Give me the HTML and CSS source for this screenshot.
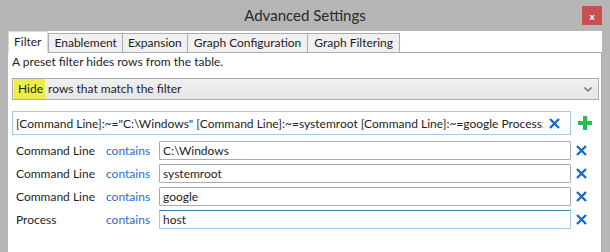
FILE: index.html
```html
<!DOCTYPE html>
<html lang="en">
<head>
  <meta charset="UTF-8">
  <title>Advanced Settings</title>
  <link rel="stylesheet" href="styles.css">
</head>
<body>
  <div class="window">
    <!-- Barra de título -->
    <div class="titlebar">
      <span class="title">Advanced Settings</span>
      <span class="close">x</span>
    </div>

    <div class="client">
      <!-- Abas -->
      <div class="tabs">
        <div class="tab active">Filter</div>
        <div class="tab">Enablement</div>
        <div class="tab">Expansion</div>
        <div class="tab">Graph Configuration</div>
        <div class="tab">Graph Filtering</div>
      </div>

      <div class="pane">
        <p class="hint">A preset filter hides rows from the table.</p>

        <div class="select">
          <span class="select-text"><span class="hl">Hide</span> rows that match the filter</span>
          <svg class="chevron" width="8" height="5" viewBox="0 0 8 5">
            <path d="M0.5 0.5 L4 4 L7.5 0.5" fill="none" stroke="#606060" stroke-width="1.2"/>
          </svg>
        </div>

        <div class="query-row">
          <div class="query">
            <span class="query-text">[Command Line]:~="C:\Windows" [Command Line]:~=systemroot [Command Line]:~=google Process:~=host</span>
            <svg class="icon-x" width="11" height="11" viewBox="0 0 11 11">
              <path d="M1 1 L10 10 M10 1 L1 10" stroke="#1b6ac9" stroke-width="2.4"/>
            </svg>
          </div>
          <svg class="icon-plus" width="14" height="14" viewBox="0 0 14 14">
            <path d="M7 0 V14 M0 7 H14" stroke="#22c14f" stroke-width="4"/>
          </svg>
        </div>

        <div class="conditions">
          <div class="cond">
            <span class="field">Command Line</span>
            <span class="op">contains</span>
            <div class="value">C:\Windows</div>
            <svg class="icon-x" width="11" height="11" viewBox="0 0 11 11"><path d="M1 1 L10 10 M10 1 L1 10" stroke="#1b6ac9" stroke-width="2.4"/></svg>
          </div>
          <div class="cond">
            <span class="field">Command Line</span>
            <span class="op">contains</span>
            <div class="value">systemroot</div>
            <svg class="icon-x" width="11" height="11" viewBox="0 0 11 11"><path d="M1 1 L10 10 M10 1 L1 10" stroke="#1b6ac9" stroke-width="2.4"/></svg>
          </div>
          <div class="cond">
            <span class="field">Command Line</span>
            <span class="op">contains</span>
            <div class="value">google</div>
            <svg class="icon-x" width="11" height="11" viewBox="0 0 11 11"><path d="M1 1 L10 10 M10 1 L1 10" stroke="#1b6ac9" stroke-width="2.4"/></svg>
          </div>
          <div class="cond">
            <span class="field">Process</span>
            <span class="op">contains</span>
            <div class="value focus">host</div>
            <svg class="icon-x" width="11" height="11" viewBox="0 0 11 11"><path d="M1 1 L10 10 M10 1 L1 10" stroke="#1b6ac9" stroke-width="2.4"/></svg>
          </div>
        </div>
      </div>
    </div>
  </div>
</body>
</html>
```

FILE: styles.css
```css
/* Reset */
* {
  margin: 0;
  padding: 0;
  box-sizing: border-box;
}

body {
  font-family: Lato, "Noto Sans", sans-serif;
  font-size: 12px;
  color: #1e1e1e;
  background: #b6b6b6;
  width: 610px;
  height: 252px;
  overflow: hidden;
}

.window {
  height: 252px;
  display: flex;
  flex-direction: column;
}

/* Barra de título */
.titlebar {
  height: 31px;
  flex: none;
  display: flex;
  align-items: center;
  justify-content: center;
  position: relative;
}

.title {
  font-size: 15px;
  color: #2a2a2a;
  margin-top: -1px;
}

.close {
  position: absolute;
  top: 6px;
  right: 8px;
  width: 20px;
  height: 19px;
  background: #c75050;
  color: #fff;
  font-weight: bold;
  font-size: 10px;
  display: flex;
  align-items: center;
  justify-content: center;
  line-height: 1;
}

/* Área cliente */
.client {
  flex: 1;
  margin: 0 8px;
  background: #fff;
  display: flex;
  flex-direction: column;
}

.tabs {
  height: 21px;
  display: flex;
  align-items: flex-end;
  flex: none;
}

.tab {
  height: 19px;
  padding: 0 5px;
  background: #f0f0f0;
  border: 1px solid #acacac;
  border-bottom: none;
  margin-left: -1px;
  line-height: 17px;
  white-space: nowrap;
}

.tab:nth-child(2) {
  margin-left: 0;
}

.tab:nth-child(4),
.tab:nth-child(5) {
  padding: 0 6px;
}

.tab.active {
  background: #fff;
  border-color: #d9d9d9;
  margin-left: 0;
  padding: 0 6px 0 5px;
  line-height: 20px;
  position: relative;
  z-index: 1;
  margin-bottom: -1px;
  height: 22px;
}

.pane {
  flex: 1;
  border-top: 1px solid #acacac;
  border-right: 1px solid #acacac;
  padding: 1px 2px 0 4px;
}

.hint {
  line-height: 16px;
}

/* Combo */
.select {
  margin-top: 8px;
  height: 22px;
  border: 1px solid #acacac;
  background: linear-gradient(#f0f0f0, #e5e5e5);
  display: flex;
  align-items: center;
  justify-content: space-between;
  padding: 0 6px 0 1px;
}

.select-text {
  line-height: 20px;
}

.hl {
  background: #eded4a;
  display: inline-block;
  padding: 0 2px 0 4px;
}

/* Consulta */
.query-row {
  margin-top: 11px;
  display: flex;
  align-items: center;
}

.query {
  width: 559px;
  height: 24px;
  border: 1px solid #a6cbe6;
  display: flex;
  align-items: center;
  padding: 0 10px 0 3px;
  gap: 6px;
}

.query-text {
  flex: 1;
  overflow: hidden;
  white-space: nowrap;
}

.icon-plus {
  margin-left: 7px;
}

/* Condições */
.conditions {
  margin-top: 6px;
  display: flex;
  flex-direction: column;
  gap: 4px;
}

.cond {
  display: flex;
  align-items: center;
  height: 19px;
}

.field {
  width: 94px;
  padding-left: 4px;
  white-space: nowrap;
}

.op {
  width: 53px;
  color: #1f6ed4;
}

.value {
  width: 412px;
  height: 19px;
  border: 1px solid #acacac;
  border-radius: 1px;
  padding-left: 3px;
  line-height: 17px;
}

.value.focus {
  border-color: #a6cbe6;
  border-top-color: #3c7fb1;
}

.cond .icon-x {
  margin-left: 5px;
}
```
